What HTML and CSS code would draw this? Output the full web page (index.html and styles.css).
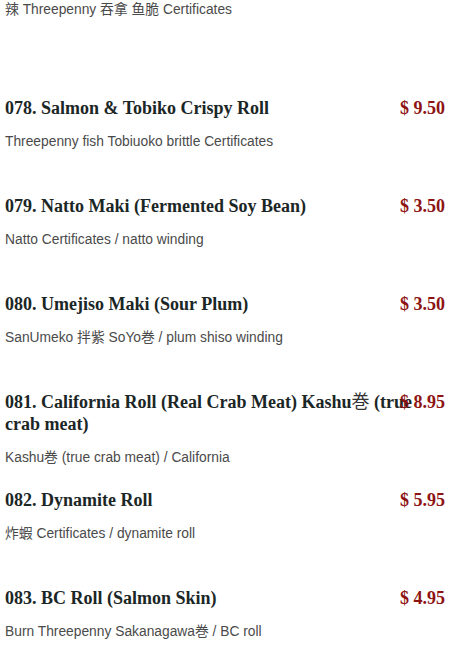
FILE: index.html
```html
<!DOCTYPE html>
<html>
<head>
<meta charset="utf-8">
<link rel="stylesheet" href="styles.css">
</head>
<body>
<div class="menu">
  <div class="item item-tail">
    <p class="desc">辣 Threepenny 吞拿 鱼脆 Certificates</p>
  </div>
  <div class="item">
    <h3 class="title">078. Salmon &amp; Tobiko Crispy Roll<span class="price">$ 9.50</span></h3>
    <p class="desc">Threepenny fish Tobiuoko brittle Certificates</p>
  </div>
  <div class="item">
    <h3 class="title">079. Natto Maki (Fermented Soy Bean)<span class="price">$ 3.50</span></h3>
    <p class="desc">Natto Certificates / natto winding</p>
  </div>
  <div class="item">
    <h3 class="title">080. Umejiso Maki (Sour Plum)<span class="price">$ 3.50</span></h3>
    <p class="desc">SanUmeko 拌紫 SoYo巻 / plum shiso winding</p>
  </div>
  <div class="item">
    <h3 class="title">081. California Roll (Real Crab Meat) Kashu<span class="cjk">巻</span> (true crab meat)<span class="price">$ 8.95</span></h3>
    <p class="desc">Kashu巻 (true crab meat) / California</p>
  </div>
  <div class="item">
    <h3 class="title">082. Dynamite Roll<span class="price">$ 5.95</span></h3>
    <p class="desc">炸蝦 Certificates / dynamite roll</p>
  </div>
  <div class="item">
    <h3 class="title">083. BC Roll (Salmon Skin)<span class="price">$ 4.95</span></h3>
    <p class="desc">Burn Threepenny Sakanagawa巻 / BC roll</p>
  </div>
</div>
</body>
</html>
```
FILE: styles.css
```css
html, body {
  margin: 0;
  padding: 0;
  background: #ffffff;
}
.menu {
  padding: 1px 5px 0 5px;
  display: flex;
  flex-direction: column;
}
.item {
  min-height: 98px;
  display: flex;
  flex-direction: column;
  gap: 14px;
}
.item-tail {
  min-height: 96px;
}
.title {
  position: relative;
  margin: 0;
  font-family: "Liberation Serif", "Noto Sans CJK JP", serif;
  font-weight: bold;
  font-size: 18px;
  line-height: 22px;
  color: #1b2626;
}
.cjk {
  font-weight: normal;
  color: #333;
}
.price {
  position: absolute;
  right: 0;
  top: 0;
  color: #8e1414;
}
.desc {
  margin: 0;
  font-family: "Liberation Sans", "Noto Sans CJK SC", sans-serif;
  font-size: 13.8px;
  line-height: 18px;
  color: #4a4a4a;
}
```
